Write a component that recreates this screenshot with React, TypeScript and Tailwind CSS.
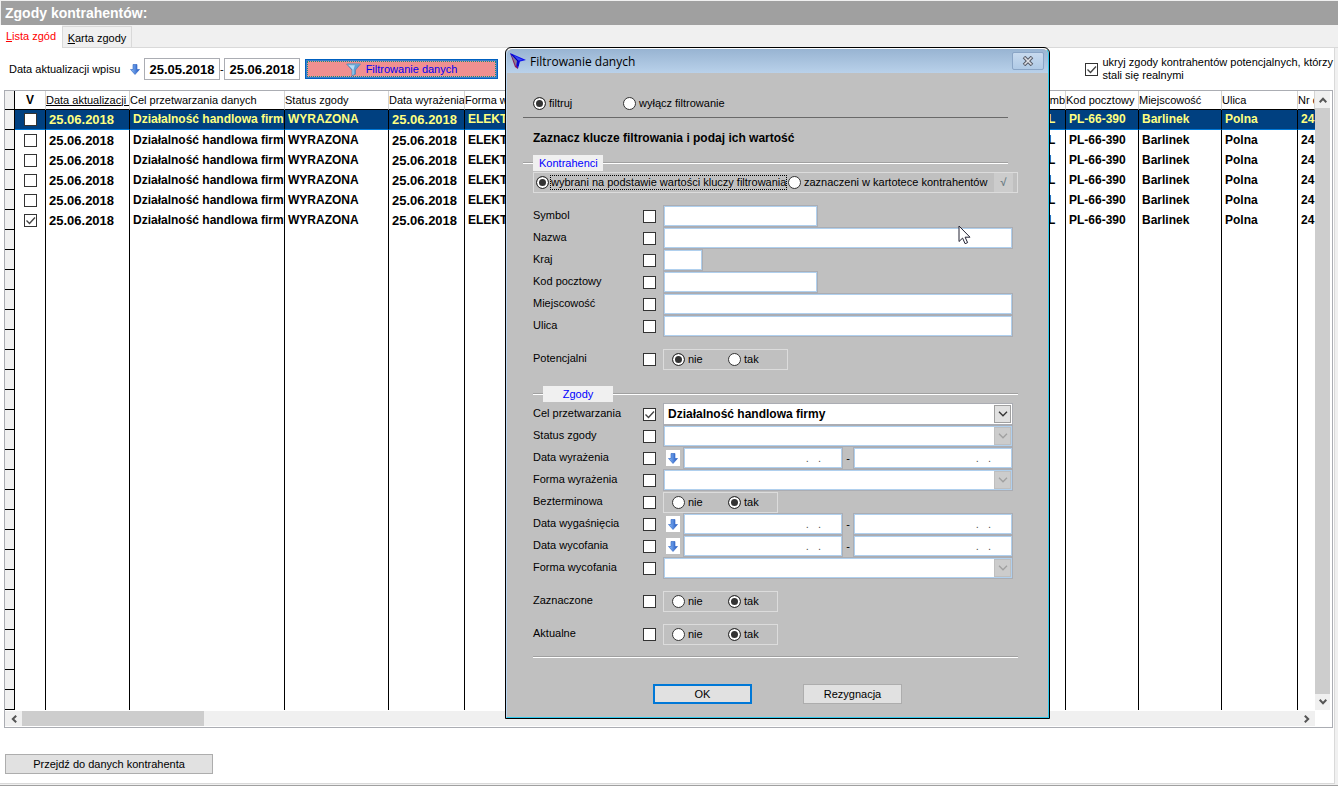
import React from 'react'

interface Consent {
    date: string
    purpose: string
    status: string
    form: string
    country: string
    postCode: string
    city: string
    street: string
    houseNo: string
    checked: boolean
}

const consent: Consent = {
    date: '25.06.2018',
    purpose: 'Działalność handlowa firmy',
    status: 'WYRAZONA',
    form: 'ELEKTRONICZNA',
    country: 'PL',
    postCode: 'PL-66-390',
    city: 'Barlinek',
    street: 'Polna',
    houseNo: '24',
    checked: false,
}

const rows: Consent[] = [consent, consent, consent, consent, consent, { ...consent, checked: true }]
const emptyRows = Array.from({ length: 24 })

const DownArrow = () => (
    <svg width="10" height="11" viewBox="0 0 10 11" aria-hidden="true">
        <defs>
            <linearGradient id="arrowFill" x1="0" y1="0" x2="1" y2="0">
                <stop offset="0" stopColor="#8fc0f8" />
                <stop offset="1" stopColor="#1f55c4" />
            </linearGradient>
        </defs>
        <path d="M3 .5h4v5h2.500L5 10.500.5 5.500H3z" fill="url(#arrowFill)" stroke="#2a5fc0" strokeWidth=".6" />
    </svg>
)

const Chevron = ({ className }: { className?: string }) => (
    <svg width="10" height="6" viewBox="0 0 10 6" fill="none" className={className} aria-hidden="true">
        <path d="M1 .8l4 4 4-4" stroke="currentColor" strokeWidth="1.300" />
    </svg>
)

const ScrollChevron = ({ className }: { className?: string }) => (
    <svg width="8" height="6" viewBox="0 0 8 6" fill="none" className={className} aria-hidden="true">
        <path d="M.7 .8L4 4.200 7.300 .8" stroke="#555" strokeWidth="2" />
    </svg>
)

const Funnel = () => (
    <svg width="15" height="13" viewBox="0 0 15 13" aria-hidden="true">
        <path d="M.6 1h13.800L9.500 7v4.200L6 12.700V7z" fill="#5fa3d8" stroke="#4b80ad" strokeWidth=".7" />
        <path d="M2 1.700h7L7.500 6.800v4.700l-1 .4V6.600z" fill="#b5ddf7" />
        <ellipse cx="7.500" cy="1.300" rx="6.800" ry=".9" fill="#6ea6cf" />
    </svg>
)

const Logo = () => (
    <svg width="16" height="16" viewBox="0 0 16 16" aria-hidden="true">
        <path d="M0 0l5 14 3 2V9z" fill="#8a1858" />
        <path d="M0 0l16 7-6 1.500-2 7z" fill="#0b0bf0" />
        <path d="M1.500 2L6 13.500 7 8z" fill="#8c7a8c" />
        <path d="M3 2l5 5.500 5-.5z" fill="#3a4cf0" />
        <path d="M2 1.500L8 8v5" fill="none" stroke="#0000a8" strokeWidth="1" />
    </svg>
)

const CheckBox = ({ id, label, checked = false }: { id: string; label?: string; checked?: boolean }) => (
    <span className="inline-grid shrink-0">
        <input
            id={id}
            type="checkbox"
            aria-label={label}
            defaultChecked={checked}
            className="peer col-start-1 row-start-1 h-[13px] w-[13px] appearance-none border border-[#333] bg-white"
        />
        <svg
            viewBox="0 0 13 13"
            fill="none"
            aria-hidden="true"
            className="pointer-events-none invisible col-start-1 row-start-1 h-[13px] w-[13px] peer-checked:visible"
        >
            <path d="M2.500 6.500l3 3 5.500-6" stroke="#444" strokeWidth="1.400" />
        </svg>
    </span>
)

const Radio = ({ name, text, checked = false, focused = false }: {
    name: string
    text: string
    checked?: boolean
    focused?: boolean
}) => (
    <label className="flex items-center gap-[2px]">
        <input
            type="radio"
            name={name}
            defaultChecked={checked}
            className="h-[13px] w-[13px] shrink-0 appearance-none rounded-full border border-[#333] bg-white shadow-[inset_0_0_0_2px_white] checked:bg-[#333]"
        />
        <span className={focused ? 'outline-1 outline-dotted outline-black' : 'pl-px'}>{text}</span>
    </label>
)

const fieldStyle = 'h-[22px] border border-[#abadb3] bg-white shadow-[inset_0_0_0_1px_#b0d0ee] outline-none'

const Row = ({ id, label, checked = false, children }: {
    id: string
    label: string
    checked?: boolean
    children: React.ReactNode
}) => (
    <div className="flex h-[22px] items-center">
        <label htmlFor={id} className="w-[110px] pb-px">{label}</label>
        <CheckBox id={id} checked={checked} />
        <div className="ml-[7px] flex flex-1 items-center">{children}</div>
    </div>
)

const TextField = ({ label, className }: { label: string; className: string }) => (
    <input type="text" aria-label={label} className={`${fieldStyle} px-1 ${className}`} />
)

const SelectField = ({ label, value }: { label: string; value?: string }) => (
    <div className="relative w-[350px]">
        <select
            aria-label={label}
            disabled={!value}
            className={`w-full appearance-none pl-1 text-[12px] font-bold text-black opacity-100 ${value ? 'h-[22px] border border-[#abadb3] bg-white' : fieldStyle}`}
        >
            <option>{value}</option>
        </select>
        <span
            className={`pointer-events-none absolute top-[2px] right-[2px] flex h-[18px] w-[17px] items-center justify-center border ${value ? 'border-[#a0a0a0] bg-[#e1e1e1] text-[#333]' : 'border-[#bfbfbf] bg-[#ccc] text-[#a0a0a0]'}`}
        >
            <Chevron />
        </span>
    </div>
)

const DateRange = ({ label }: { label: string }) => (
    <>
        <button type="button" aria-label={label} className="ml-[3px] mr-[3px] flex h-4 w-[14px] items-center justify-center bg-white">
            <DownArrow />
        </button>
        <input
            type="text"
            aria-label={`${label} od`}
            placeholder={'.\u00a0\u00a0\u00a0.'}
            className={`${fieldStyle} w-40 pr-[21px] text-right placeholder:text-[#555]`}
        />
        <span className="w-[10px] text-center">-</span>
        <input
            type="text"
            aria-label={`${label} do`}
            placeholder={'.\u00a0\u00a0\u00a0.'}
            className={`${fieldStyle} w-40 pr-[21px] text-right placeholder:text-[#555]`}
        />
    </>
)

const YesNo = ({ name, yes = false, className }: { name: string; yes?: boolean; className: string }) => (
    <div className={`flex h-[21px] items-center border border-[#dcdcdc] pl-2 ${className}`}>
        <div className="w-14"><Radio name={name} text="nie" checked={!yes} /></div>
        <Radio name={name} text="tak" checked={yes} />
    </div>
)

const GroupTitle = ({ text, className }: { text: string; className: string }) => (
    <div className="flex items-center">
        <div className="h-[2px] w-[10px] border-t border-[#a0a0a0] bg-white"></div>
        <div className={`h-4 w-[70px] bg-[#f0f0f0] leading-4 text-[#0000ff] ${className}`}>{text}</div>
        <div className="h-[2px] flex-1 border-t border-[#a0a0a0] bg-white"></div>
    </div>
)

const FilterDialog = () => (
    <div
        role="dialog"
        aria-label="Filtrowanie danych"
        className="absolute top-[47px] left-[505px] w-[545px] rounded-t-md border border-black bg-[#c0c0c0]"
    >
        <div className="rounded-t-md border border-t-white border-r-[#2cc9ee] border-b-[#2cc9ee] border-l-[#b9d6f2]">
            <div className="flex h-6 items-center rounded-t-md bg-linear-to-b from-[#98b4d2] to-[#b9d1ea] pl-[3px] pr-1">
                <Logo />
                <span className="ml-1 flex-1 font-['Open_Sans',sans-serif] text-[12px]">Filtrowanie danych</span>
                <button
                    type="button"
                    aria-label="Zamknij"
                    className="flex h-[18px] w-8 items-center justify-center rounded-[2px] border border-[#8aa5c6] bg-linear-to-b from-[#c8daee] to-[#b0cae6]"
                >
                    <svg width="12" height="10" viewBox="0 0 12 10" aria-hidden="true">
                        <path d="M2 1l8 8M10 1L2 9" stroke="#555a66" strokeWidth="3.600" />
                        <path d="M2.500 1.500l7 7M9.500 1.500l-7 7" stroke="#e0e2e8" strokeWidth="1.600" />
                    </svg>
                </button>
            </div>

            <div className="pr-[30px] pl-4">
                <div className="mr-[10px] flex h-[45px] items-center border-b border-[#696969] pt-4 pl-[10px]">
                    <div className="w-[90px]"><Radio name="mode" text="filtruj" checked /></div>
                    <Radio name="mode" text="wyłącz filtrowanie" />
                </div>
                <h2 className="pt-3 pb-[9px] pl-[10px] text-[12px] leading-4 font-bold">
                    Zaznacz klucze filtrowania i podaj ich wartość
                </h2>
                <div className="mr-[10px]"><GroupTitle text="Kontrahenci" className="pl-[6px]" /></div>
                <div className="mt-px ml-[10px] flex h-[21px] items-center border border-[#dcdcdc] pl-[2px]">
                    <div className="w-[252px]">
                        <Radio name="source" text="wybrani na podstawie wartości kluczy filtrowania" checked focused />
                    </div>
                    <Radio name="source" text="zaznaczeni w kartotece kontrahentów" />
                    <button type="button" className="mr-1 ml-auto h-[19px] w-[19px] bg-[#ccc] font-bold text-[#6f7f86]">√</button>
                </div>
            </div>

            <div className="pt-[12px] pr-[30px] pl-[26px]">
                <Row id="symbol" label="Symbol"><TextField label="Symbol" className="w-[155px]" /></Row>
                <Row id="nazwa" label="Nazwa"><TextField label="Nazwa" className="w-[350px]" /></Row>
                <Row id="kraj" label="Kraj"><TextField label="Kraj" className="w-10" /></Row>
                <Row id="kod" label="Kod pocztowy"><TextField label="Kod pocztowy" className="w-[155px]" /></Row>
                <Row id="miejscowosc" label="Miejscowość"><TextField label="Miejscowość" className="w-[350px]" /></Row>
                <Row id="ulica" label="Ulica"><TextField label="Ulica" className="w-[350px]" /></Row>
                <div className="pt-[11px] pb-4">
                    <Row id="potencjalni" label="Potencjalni"><YesNo name="potencjalniValue" className="w-[125px]" /></Row>
                </div>
                <GroupTitle text="Zgody" className="text-center" />
                <div className="pt-px">
                    <Row id="cel" label="Cel przetwarzania" checked>
                        <SelectField label="Cel przetwarzania" value="Działalność handlowa firmy" />
                    </Row>
                    <Row id="status" label="Status zgody"><SelectField label="Status zgody" /></Row>
                    <Row id="dataWyrazenia" label="Data wyrażenia"><DateRange label="Data wyrażenia" /></Row>
                    <Row id="formaWyrazenia" label="Forma wyrażenia"><SelectField label="Forma wyrażenia" /></Row>
                    <Row id="bezterminowa" label="Bezterminowa"><YesNo name="bezterminowaValue" yes className="w-[115px]" /></Row>
                    <Row id="dataWygasniecia" label="Data wygaśnięcia"><DateRange label="Data wygaśnięcia" /></Row>
                    <Row id="dataWycofania" label="Data wycofania"><DateRange label="Data wycofania" /></Row>
                    <Row id="formaWycofania" label="Forma wycofania"><SelectField label="Forma wycofania" /></Row>
                </div>
                <div className="flex flex-col gap-[11px] border-b border-[#a0a0a0] py-[11px]">
                    <Row id="zaznaczone" label="Zaznaczone"><YesNo name="zaznaczoneValue" yes className="w-[115px]" /></Row>
                    <Row id="aktualne" label="Aktualne"><YesNo name="aktualneValue" yes className="w-[115px]" /></Row>
                </div>
                <div className="flex gap-[51px] border-t border-white pt-[26px] pb-[13px] pl-[120px]">
                    <button type="button" className="h-5 w-[99px] border-2 border-[#0078d7] bg-[#e1e1e1]">OK</button>
                    <button type="button" className="h-5 w-[99px] border border-[#adadad] bg-[#e1e1e1]">Rezygnacja</button>
                </div>
            </div>
        </div>

        {/* mouse pointer */}
        <svg width="13" height="20" viewBox="0 0 13 20" className="absolute top-[177px] left-[452px]" aria-hidden="true">
            <path d="M1 1v15.500l3.600-3.400 2.500 5.600 2.500-1.100-2.500-5.400H12z" fill="#fff" stroke="#223" strokeWidth="1" />
        </svg>
    </div>
)

const headCell = 'h-[19px] overflow-hidden border-b border-black border-r border-r-[#d4d4d4] text-left font-normal whitespace-nowrap'
const bodyCell = 'h-5 overflow-hidden border-r border-black pl-[3px] whitespace-nowrap'

const ConsentTable = () => (
    <table className="w-full table-fixed border-separate border-spacing-0">
        <colgroup>
            <col className="w-[10px]" />
            <col className="w-[31px]" />
            <col className="w-[84px]" />
            <col className="w-[155px]" />
            <col className="w-[104px]" />
            <col className="w-[76px]" />
            <col />
            <col className="w-[29px]" />
            <col className="w-[73px]" />
            <col className="w-[83px]" />
            <col className="w-[76px]" />
            <col className="w-[17px]" />
        </colgroup>
        <thead>
            <tr>
                <th className="border-r border-b border-black bg-[#f0f0f0]"></th>
                <th className="border-r border-b border-black border-r-[#d4d4d4] text-center text-[12px] font-bold">V</th>
                <th className={`${headCell} underline`}>Data aktualizacji wpisu</th>
                <th className={headCell}>Cel przetwarzania danych</th>
                <th className={headCell}>Status zgody</th>
                <th className={headCell}>Data wyrażenia</th>
                <th className={headCell}>Forma wyrażenia</th>
                <th className={headCell}>Symbol</th>
                <th className={headCell}>Kod pocztowy</th>
                <th className={headCell}>Miejscowość</th>
                <th className={headCell}>Ulica</th>
                <th className={headCell}>Nr domu</th>
            </tr>
        </thead>
        <tbody className="text-[12px] font-bold">
            {rows.map((row, idx) => (
                <tr
                    key={'row_' + idx}
                    className={idx === 0 ? 'bg-[#004080] text-[#ffff80] [&>td:not(:first-child)]:border-b [&>td:not(:first-child)]:border-b-[#0078d7]' : ''}
                >
                    <td className="border-r border-b border-black bg-[#f0f0f0]"></td>
                    <td className="h-5 border-r border-black leading-none">
                        <span className="flex justify-center">
                            <CheckBox id={'row_check_' + idx} label={'V ' + (idx + 1)} checked={row.checked} />
                        </span>
                    </td>
                    <td className={`${bodyCell} text-[13px] leading-none`}>{row.date}</td>
                    <td className={bodyCell}>{row.purpose}</td>
                    <td className={bodyCell}>{row.status}</td>
                    <td className={`${bodyCell} text-[13px] leading-none`}>{row.date}</td>
                    <td className={bodyCell}>{row.form}</td>
                    <td className={bodyCell}>{row.country}</td>
                    <td className={bodyCell}>{row.postCode}</td>
                    <td className={bodyCell}>{row.city}</td>
                    <td className={bodyCell}>{row.street}</td>
                    <td className="overflow-hidden pl-[3px]">{row.houseNo}</td>
                </tr>
            ))}
            {emptyRows.map((_, idx) => (
                <tr key={'empty_' + idx}>
                    <td className="border-r border-b border-black bg-[#f0f0f0]"></td>
                    <td className={bodyCell}></td>
                    <td className={bodyCell}></td>
                    <td className={bodyCell}></td>
                    <td className={bodyCell}></td>
                    <td className={bodyCell}></td>
                    <td className={bodyCell}></td>
                    <td className={bodyCell}></td>
                    <td className={bodyCell}></td>
                    <td className={bodyCell}></td>
                    <td className={bodyCell}></td>
                    <td></td>
                </tr>
            ))}
        </tbody>
    </table>
)

const dateInput = 'h-[22px] w-[76px] border border-[#abadb3] bg-white text-center text-[13px] font-bold outline-none'

const App: React.FC = () => {
    return (
        <div className="relative flex min-h-screen flex-col bg-[#f0f0f0] pt-px font-['Liberation_Sans',Arial,sans-serif] text-[11px] leading-[13px] text-black">
            <h1 className="ml-px h-6 bg-[#a0a0a0] pl-1 text-[14px] leading-6 font-bold text-white">Zgody kontrahentów:</h1>

            <div className="flex h-[23px]" role="tablist">
                <button type="button" role="tab" aria-selected="true" className="w-[62px] bg-white text-[#f00]">
                    <span className="underline">L</span>ista zgód
                </button>
                <button type="button" role="tab" aria-selected="false" className="mt-px w-[70px] border border-[#d9d9d9] pt-[2px]">
                    <span className="underline">K</span>arta zgody
                </button>
                <div className="flex-1 border-b border-[#d9d9d9]"></div>
            </div>

            <main className="mr-[3px] flex-1 border-r border-b border-[#d9d9d9] bg-white pr-px pl-1">
                <div className="flex h-[42px] items-center pl-[5px]">
                    <label htmlFor="dateFrom" className="w-[121px]">Data aktualizacji wpisu</label>
                    <DownArrow />
                    <input id="dateFrom" type="text" defaultValue="25.05.2018" className={`${dateInput} ml-1`} />
                    <span className="w-1">-</span>
                    <input type="text" aria-label="Data do" defaultValue="25.06.2018" className={dateInput} />
                    <button type="button" className="ml-[5px] h-5 w-[193px] border border-[#0060c0] bg-[#f09090] p-px text-[#0000f0] ring-1 ring-[#3c80d0] ring-inset">
                        <span className="flex h-full items-center justify-center gap-[5px] border border-dotted border-[#109080]">
                            <Funnel />
                            Filtrowanie danych
                        </span>
                    </button>
                    <div className="ml-auto flex items-center gap-1">
                        <CheckBox id="hidePotential" checked />
                        <label htmlFor="hidePotential" className="whitespace-nowrap">
                            ukryj zgody kontrahentów potencjalnych, którzy<br />stali się realnymi
                        </label>
                    </div>
                </div>

                <div className="border border-[#abadb3] pb-px">
                    <div className="flex pr-[2px]">
                        <div className="min-w-0 flex-1"><ConsentTable /></div>
                        <div className="flex w-[15px] flex-col bg-[#f0f0f0]">
                            <button type="button" aria-label="W górę" className="flex h-[17px] items-center justify-center">
                                <ScrollChevron className="rotate-180" />
                            </button>
                            <div className="flex-1 bg-[#cdcdcd]"></div>
                            <button type="button" aria-label="W dół" className="flex h-4 items-center justify-center">
                                <ScrollChevron />
                            </button>
                        </div>
                    </div>
                    <div className="mt-px mr-[17px] flex h-[15px] bg-[#f0f0f0]">
                        <button type="button" aria-label="W lewo" className="flex w-[17px] items-center justify-center">
                            <ScrollChevron className="rotate-90" />
                        </button>
                        <div className="w-[182px] bg-[#cdcdcd]"></div>
                        <button type="button" aria-label="W prawo" className="ml-auto flex w-[17px] items-center justify-center">
                            <ScrollChevron className="-rotate-90" />
                        </button>
                    </div>
                </div>

                <button type="button" className="mt-[26px] ml-px h-5 w-[208px] border border-[#adadad] bg-[#e1e1e1]">
                    Przejdź do danych kontrahenta
                </button>
            </main>
            <footer className="mt-px h-[2px] border-t border-[#a0a0a0] bg-white"></footer>

            <FilterDialog />
        </div>
    )
}

export default App
